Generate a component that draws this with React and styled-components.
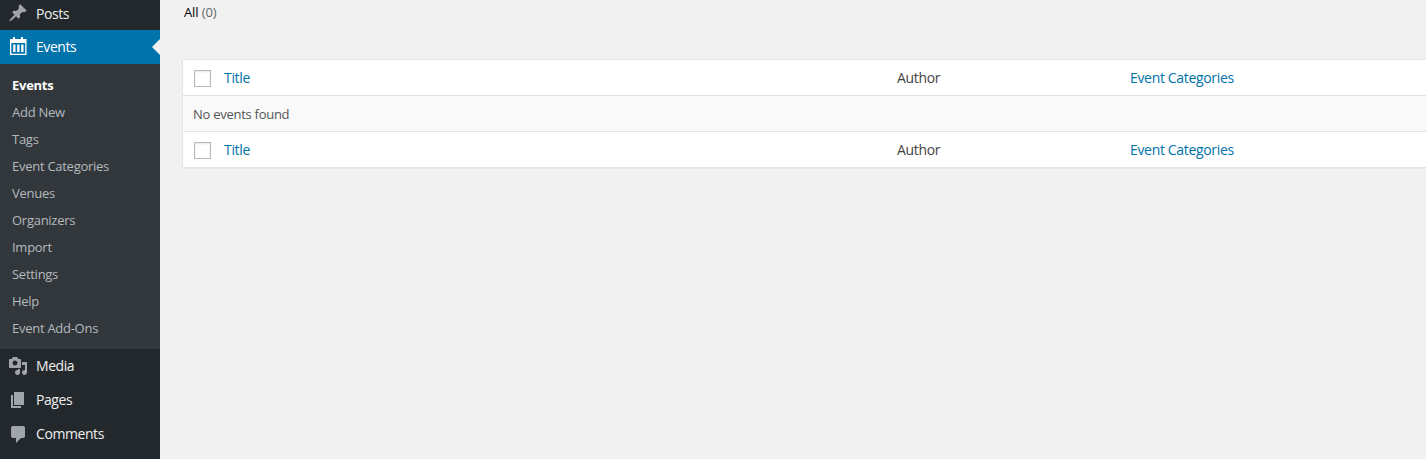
import React from "react";
import styled, { createGlobalStyle } from "styled-components";

const Global = createGlobalStyle`
  html, body { margin: 0; padding: 0; height: 100%; overflow: hidden; background: #f1f1f1; }
  #root { height: 100%; }
  * { box-sizing: border-box; }
`;
const Font = `"Open Sans", "Noto Sans", sans-serif`;

const Page = styled.div`
  display: flex;
  height: 459px;
  width: 1426px;
  overflow: hidden;
  font: 13px/19px ${Font};
  letter-spacing: -0.27px;
  color: #444;
`;
const Sidebar = styled.nav`
  width: 160px;
  flex: none;
  background: #23282d;
`;
const MenuItem = styled.div`
  display: flex;
  align-items: center;
  height: ${(p) => p.$h || 34}px;
  padding: 0 0 ${(p) => p.$pb ?? 1}px 8px;
  gap: 8px;
  position: relative;
  font-size: 14px;
  letter-spacing: -0.42px;
  color: ${(p) => (p.$active ? "#fff" : "#eee")};
  background: ${(p) => (p.$active ? "#0073aa" : "transparent")};
`;
const MenuIcon = styled.svg`
  width: 20px;
  height: 20px;
  flex: none;
  fill: ${(p) => (p.$active ? "#fff" : "#a0a5aa")};
`;
const Notch = styled.span`
  position: absolute;
  right: 0;
  top: 50%;
  margin-top: -8px;
  border: 8px solid transparent;
  border-left-width: 0;
  border-right-color: #f1f1f1;
`;
const Submenu = styled.div`
  background: #32373c;
  padding: 8px 0 7px;
  display: flex;
  flex-direction: column;
`;
const SubItem = styled.div`
  height: 27px;
  line-height: 27px;
  padding-left: 12px;
  color: ${(p) => (p.$current ? "#fff" : "#b4b9be")};
  font-weight: ${(p) => (p.$current ? 700 : 400)};
`;
const Main = styled.main`
  flex: 1;
  min-width: 0;
  padding: 3px 0 0 22px;
`;
const Filters = styled.div`
  height: 56px;
  padding-left: 2px;
  letter-spacing: -0.1px;
  color: #666;
`;
const FilterCurrent = styled.span`
  color: #000;
`;
const Table = styled.div`
  background: #fff;
  border: 1px solid #e5e5e5;
  border-right: 0;
  box-shadow: 0 1px 1px rgba(0, 0, 0, 0.04);
`;
const Row = styled.div`
  display: grid;
  grid-template-columns: 41px 673px 233px 1fr;
  align-items: center;
  height: ${(p) => (p.$top ? 36 : 35)}px;
  font-size: 14px;
  letter-spacing: -0.33px;
  ${(p) => p.$top && "border-top: 1px solid #e1e1e1;"}
`;
const CheckCell = styled.div`
  padding: 2px 0 0 11px;
  display: flex;
`;
const Check = styled.span`
  width: 17px;
  height: 17px;
  background: #fff;
  border: 1px solid #b4b9be;
  box-shadow: inset 0 1px 2px rgba(0, 0, 0, 0.1);
`;
const ColLink = styled.span`
  color: #0073aa;
`;
const ColText = styled.span`
  color: #444;
`;
const Empty = styled.div`
  height: 36px;
  line-height: 36px;
  padding-left: 10px;
  background: #f9f9f9;
  border-top: 1px solid #e1e1e1;
  color: #555;
`;

const PostsIcon = () => (
  <MenuIcon viewBox="0 0 20 20">
    <path d="M10.44 3.02l1.82-1.82 6.36 6.35-1.83 1.82c-1.05-.68-2.48-.57-3.41.36l-.75.75c-.92.93-1.04 2.35-.35 3.41l-1.83 1.82-2.41-2.41-2.8 2.79c-.42.42-3.38 2.71-3.8 2.29s1.86-3.39 2.28-3.81l2.79-2.79L4.1 9.36l1.83-1.82c1.05.69 2.48.57 3.4-.36l.75-.75c.93-.92 1.05-2.35.36-3.41z" />
  </MenuIcon>
);
const EventsIcon = () => (
  <MenuIcon $active viewBox="0 0 20 20">
    <path
      fillRule="evenodd"
      d="M5 1h2v2h6V1h2v2h3.500v16H2V3h3V1zM3.300 7v10.800h13.900V7H3.300zM5.200 8.500h2.300V16H5.200V8.500zm4 0h2.300V16H9.200V8.500zm4 0h2.300V16h-2.300V8.500z"
    />
  </MenuIcon>
);
const MediaIcon = () => (
  <MenuIcon viewBox="0 0 20 20">
    <path d="M13 11V4c0-.55-.45-1-1-1h-1.670L9 1H5L3.670 3H2c-.55 0-1 .45-1 1v7c0 .55.45 1 1 1h10c.55 0 1-.45 1-1zM7 4.500c1.380 0 2.500 1.120 2.500 2.500S8.380 9.500 7 9.500 4.500 8.380 4.500 7 5.620 4.500 7 4.500zM14 6h5v10.500c0 1.380-1.120 2.500-2.500 2.500S14 17.880 14 16.500s1.120-2.500 2.500-2.500c.17 0 .34.020.5.050V9h-3V6zm-4 8.050V13h2v3.500c0 1.380-1.120 2.500-2.500 2.500S7 17.880 7 16.500 8.120 14 9.500 14c.17 0 .34.020.5.050z" />
  </MenuIcon>
);
const PagesIcon = () => (
  <MenuIcon viewBox="0 0 20 20">
    <path d="M6 15V2h10v13H6zm-1 1h8v2H3V5h2v11z" />
  </MenuIcon>
);
const CommentsIcon = () => (
  <MenuIcon viewBox="0 0 20 20">
    <path d="M5 2h10c1.100 0 2 .9 2 2v8c0 1.100-.9 2-2 2h-2l-5 5v-5H5c-1.100 0-2-.9-2-2V4c0-1.100.9-2 2-2z" />
  </MenuIcon>
);

const subs = ["Add New", "Tags", "Event Categories", "Venues", "Organizers", "Import", "Settings", "Help", "Event Add-Ons"];

const Head = ({ top }) => (
  <Row $top={top}>
    <CheckCell><Check /></CheckCell>
    <ColLink>Title</ColLink>
    <ColText>Author</ColText>
    <ColLink>Event Categories</ColLink>
  </Row>
);

export default function App() {
  return (
    <Page>
      <Global />
      <Sidebar>
        <MenuItem $h={30} $pb={4}><PostsIcon />Posts</MenuItem>
        <MenuItem $active $pb={2}><EventsIcon />Events<Notch /></MenuItem>
        <Submenu>
          <SubItem $current>Events</SubItem>
          {subs.map((s) => <SubItem key={s}>{s}</SubItem>)}
        </Submenu>
        <MenuItem><MediaIcon />Media</MenuItem>
        <MenuItem><PagesIcon />Pages</MenuItem>
        <MenuItem><CommentsIcon />Comments</MenuItem>
      </Sidebar>
      <Main>
        <Filters><FilterCurrent>All</FilterCurrent> (0)</Filters>
        <Table>
          <Head />
          <Empty>No events found</Empty>
          <Head top />
        </Table>
      </Main>
    </Page>
  );
}
